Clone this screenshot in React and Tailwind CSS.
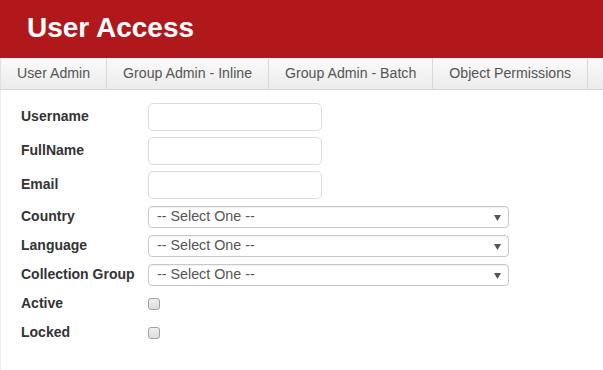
import React from 'react';

const tabs = ['User Admin', 'Group Admin - Inline', 'Group Admin - Batch', 'Object Permissions'];

function TextRow({ label }) {
  return (
    <div className="flex items-center h-[28px]">
      <label className="w-[127px] pb-[1px] text-[14px] font-bold text-[#333]">{label}</label>
      <input
        type="text"
        className="w-[174px] h-[28px] rounded-[5px] border border-[#dcdcdc] bg-white outline-none"
      />
    </div>
  );
}

function SelectRow({ label }) {
  return (
    <div className="flex items-center h-[22px]">
      <label className="w-[127px] pb-[1px] text-[14px] font-bold text-[#333] whitespace-nowrap">{label}</label>
      <div className="relative flex items-center w-[361px] h-[22px] rounded-[4px] border border-[#c8c8c8] bg-white shadow-[inset_0_1px_1px_rgba(0,0,0,0.06)] pl-[8px]">
        <span className="text-[14.3px] text-[#555]">-- Select One --</span>
        <svg className="absolute right-[7px] top-[8px]" width="7" height="6" viewBox="0 0 7 6">
          <polygon points="0,0 7,0 3.5,6" fill="#555" />
        </svg>
      </div>
    </div>
  );
}

function CheckRow({ label }) {
  return (
    <div className="flex items-center h-[22px]">
      <label className="w-[127px] pb-[1px] text-[14px] font-bold text-[#333]">{label}</label>
      <div className="w-[12px] h-[12px] rounded-[3px] border border-[#a0a0a0] bg-gradient-to-b from-[#f0f0f0] to-[#dcdcdc]" />
    </div>
  );
}

export default function App() {
  return (
    <div className="w-[603px] h-[370px] bg-white font-['Liberation_Sans',Arial,sans-serif] overflow-hidden">
      <div className="h-[58px] bg-[#b0181b] flex items-center pl-[27px]">
        <h1 className="text-[28px] font-bold text-white leading-none pb-[2px]">User Access</h1>
      </div>
      <div className="flex h-[32px] border-l border-[#e2e2e2] border-b border-b-[#d6d6d6] bg-gradient-to-b from-[#fbfbfb] to-[#ebebeb]">
        {tabs.map((t) => (
          <div key={t} className="flex items-center px-4 border-r border-[#d8d8d8] text-[14.15px] text-[#555] whitespace-nowrap">
            {t}
          </div>
        ))}
      </div>
      <div className="h-[280px] border-l border-[#ececec] pl-[20px] pt-[13px] flex flex-col">
        <div className="flex flex-col gap-[6px]">
          <TextRow label="Username" />
          <TextRow label="FullName" />
          <TextRow label="Email" />
        </div>
        <div className="flex flex-col gap-[7px] mt-[7px]">
          <SelectRow label="Country" />
          <SelectRow label="Language" />
          <SelectRow label="Collection Group" />
          <CheckRow label="Active" />
          <CheckRow label="Locked" />
        </div>
      </div>
    </div>
  );
}
